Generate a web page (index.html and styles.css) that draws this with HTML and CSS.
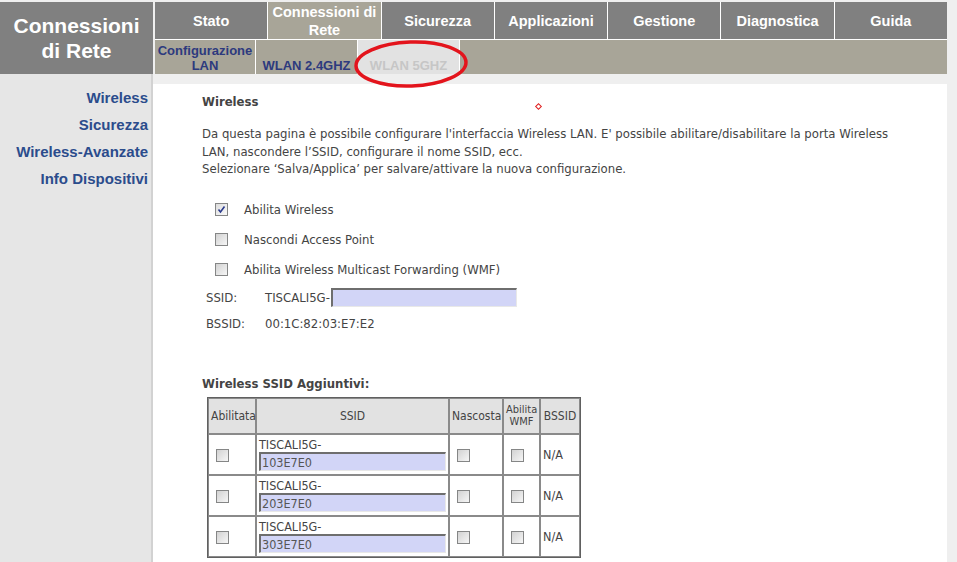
FILE: index.html
```html
<!DOCTYPE html>
<html lang="it">
<head>
<meta charset="UTF-8">
<title>Wireless - Configurazione</title>
<link rel="stylesheet" href="styles.css">
</head>
<body>
<div class="page">
    <div class="header">
        <div class="logo">Connessioni<br>di Rete</div>
        <div class="navs">
            <div class="tabs">
                <div class="tab">Stato</div>
                <div class="tab active">Connessioni di Rete</div>
                <div class="tab">Sicurezza</div>
                <div class="tab">Applicazioni</div>
                <div class="tab">Gestione</div>
                <div class="tab">Diagnostica</div>
                <div class="tab">Guida</div>
            </div>
            <div class="subtabs">
                <div class="subtab">Configurazione<br>LAN</div>
                <div class="subtab">WLAN 2.4GHZ</div>
                <div class="subtab current">WLAN 5GHZ</div>
                <div class="subtab-fill"></div>
            </div>
        </div>
    </div>

    <div class="main">
        <div class="sidebar">
            <a href="#">Wireless</a>
            <a href="#">Sicurezza</a>
            <a href="#">Wireless-Avanzate</a>
            <a href="#">Info Dispositivi</a>
        </div>
        <div class="content">
            <h3>Wireless</h3>
            <p class="intro">Da questa pagina è possibile configurare l'interfaccia Wireless LAN. E' possibile abilitare/disabilitare la porta Wireless LAN, nascondere l’SSID, configurare il nome SSID, ecc.<br>Selezionare ‘Salva/Applica’ per salvare/attivare la nuova configurazione.</p>

            <div class="options">
                <div class="option"><span class="cb checked"><svg width="11" height="11" viewBox="0 0 11 11"><path d="M2.5 5.5 L4.5 8 L8.5 2.5" fill="none" stroke="#2a3a8c" stroke-width="1.6"/></svg></span>Abilita Wireless</div>
                <div class="option"><span class="cb"></span>Nascondi Access Point</div>
                <div class="option"><span class="cb"></span>Abilita Wireless Multicast Forwarding (WMF)</div>
            </div>

            <div class="field">
                <span class="field-label">SSID:</span>
                <span class="prefix">TISCALI5G-</span>
                <span class="textbox wide"></span>
            </div>
            <div class="field">
                <span class="field-label">BSSID:</span>
                <span>00:1C:82:03:E7:E2</span>
            </div>

            <h4>Wireless SSID Aggiuntivi:</h4>
            <table class="ssid-table">
                <thead>
                    <tr>
                        <th class="c-en">Abilitata</th>
                        <th class="c-ssid">SSID</th>
                        <th class="c-hide">Nascosta</th>
                        <th class="c-wmf small">Abilita<br>WMF</th>
                        <th class="c-bssid">BSSID</th>
                    </tr>
                </thead>
                <tbody>
                    <tr>
                        <td class="box"><span class="cb"></span></td>
                        <td>TISCALI5G-<span class="textbox">103E7E0</span></td>
                        <td class="box"><span class="cb"></span></td>
                        <td class="box"><span class="cb"></span></td>
                        <td>N/A</td>
                    </tr>
                    <tr>
                        <td class="box"><span class="cb"></span></td>
                        <td>TISCALI5G-<span class="textbox">203E7E0</span></td>
                        <td class="box"><span class="cb"></span></td>
                        <td class="box"><span class="cb"></span></td>
                        <td>N/A</td>
                    </tr>
                    <tr>
                        <td class="box"><span class="cb"></span></td>
                        <td>TISCALI5G-<span class="textbox">303E7E0</span></td>
                        <td class="box"><span class="cb"></span></td>
                        <td class="box"><span class="cb"></span></td>
                        <td>N/A</td>
                    </tr>
                </tbody>
            </table>
        </div>
    </div>

    <!-- annotation drawn over the screenshot -->
    <svg class="mark-circle" width="118" height="52" viewBox="0 0 118 52">
        <ellipse cx="59" cy="25" rx="55" ry="22" fill="none" stroke="#e3141c" stroke-width="3.5" transform="rotate(-2 59 25)"/>
    </svg>
    <span class="mark-dot"></span>
</div>
</body>
</html>
```

FILE: styles.css
```css
body {
    margin: 0;
    background-color: #efefef;
    font-family: "DejaVu Sans Condensed", "DejaVu Sans", sans-serif;
    font-size: 13px;
    color: #444444;
}
.page {
    position: relative;
    width: 947px;
    padding-top: 2px;
}

/* header */
.header {
    display: flex;
    height: 72px;
}
.logo {
    width: 153px;
    background-color: #808080;
    color: white;
    font-family: "Liberation Sans", Arial, sans-serif;
    font-weight: bold;
    font-size: 21px;
    line-height: 25px;
    text-align: center;
    padding-top: 11px;
    box-sizing: border-box;
}
.navs {
    flex: 1;
    margin-left: 2px;
    display: flex;
    flex-direction: column;
    background-color: white;
    gap: 1px;
}
.tabs {
    display: flex;
    height: 37px;
    gap: 1px;
}
.tab {
    flex: 1;
    background-color: #808080;
    color: white;
    font-family: "Liberation Sans", Arial, sans-serif;
    font-weight: bold;
    font-size: 14.5px;
    line-height: 18px;
    display: flex;
    align-items: center;
    justify-content: center;
    text-align: center;
}
.tab.active {
    background-color: #a8a598;
    align-items: flex-start;
    padding-top: 1px;
}
.subtabs {
    display: flex;
    height: 34px;
    gap: 1px;
}
.subtab {
    width: 100px;
    background-color: #a8a598;
    color: #2d3a7e;
    font-family: "Liberation Sans", Arial, sans-serif;
    font-weight: bold;
    font-size: 13px;
    line-height: 15px;
    text-align: center;
    display: flex;
    align-items: flex-end;
    justify-content: center;
    padding-bottom: 1px;
}
.subtab + .subtab {
    width: 101px;
}
.subtab.current {
    background-color: #e2e2e2;
    color: #c6c6c6;
}
.subtab-fill {
    flex: 1;
    background-color: #a8a598;
}

/* body */
.main {
    display: flex;
}
.sidebar {
    width: 153px;
    min-height: 490px;
    background-color: #e6e6e6;
    border-right: 2px solid #d2d2d2;
    padding-top: 10px;
    padding-right: 3px;
    box-sizing: border-box;
    display: flex;
    flex-direction: column;
    align-items: flex-end;
}
.sidebar a {
    color: #2b4c8c;
    font-family: "Liberation Sans", Arial, sans-serif;
    font-weight: bold;
    font-size: 15px;
    line-height: 27px;
    text-decoration: none;
}
.content {
    flex: 1;
    background-color: white;
    margin-top: 10px;
    padding: 9px 0 0 49px;
}
.content h3 {
    margin: 0;
    font-size: 13px;
    line-height: 17px;
    font-weight: bold;
}
.intro {
    margin: 15px 0 0 0;
    width: 700px;
    line-height: 17.5px;
}
.options {
    margin-top: 17px;
    padding-left: 13px;
}
.option {
    display: flex;
    align-items: center;
    height: 30px;
}
.option .cb {
    margin-right: 16px;
}
.cb {
    display: inline-flex;
    align-items: center;
    justify-content: center;
    width: 11px;
    height: 11px;
    border: 1px solid #858686;
    background: linear-gradient(135deg, #d2d2d2, #f6f6f6);
    vertical-align: middle;
}
.cb.checked {
    background: linear-gradient(135deg, #dcdcdc, #fafafa);
}
.field {
    display: flex;
    align-items: center;
    height: 26px;
    padding-left: 4px;
}
.field-label {
    width: 59px;
}
.prefix {
    margin-right: 1px;
}
.textbox {
    display: block;
    height: 16px;
    line-height: 17px;
    background-color: #d2d5f7;
    border-top: 2px solid #6e6e6e;
    border-left: 2px solid #6e6e6e;
    border-right: 1px solid #e8e8e8;
    border-bottom: 1px solid #e8e8e8;
    color: #555555;
    padding-left: 1px;
    font-size: 12.5px;
}
.textbox.wide {
    display: inline-block;
    width: 182px;
}
.content h4 {
    margin: 39px 0 5px 0;
    font-size: 13px;
    line-height: 16px;
    font-weight: bold;
}

/* table */
.ssid-table {
    margin-left: 5px;
    width: 374px;
    table-layout: fixed;
    border-collapse: separate;
    border-spacing: 0;
    border: 1px solid #606060;
    font-size: 12.5px;
}
.ssid-table th, .ssid-table td {
    border: 1px solid #8a8a8a;
    padding: 0 2px;
}
.ssid-table th {
    background-color: #e2e2e2;
    font-weight: normal;
    font-size: 12px;
    height: 34px;
}
.ssid-table th.small {
    font-size: 11px;
    line-height: 12px;
}
.ssid-table td {
    height: 39px;
    vertical-align: middle;
}
.ssid-table td.box {
    padding-left: 7px;
}
.c-en { width: 42px; }
.c-ssid { width: 187px; }
.c-hide { width: 48px; }
.c-wmf { width: 31px; }
.c-bssid { width: 34px; }

/* overlays */
.mark-circle {
    position: absolute;
    left: 352px;
    top: 39px;
}
.mark-dot {
    position: absolute;
    left: 536px;
    top: 104px;
    width: 3px;
    height: 3px;
    border: 1px solid #e02020;
    transform: rotate(45deg);
}
```
